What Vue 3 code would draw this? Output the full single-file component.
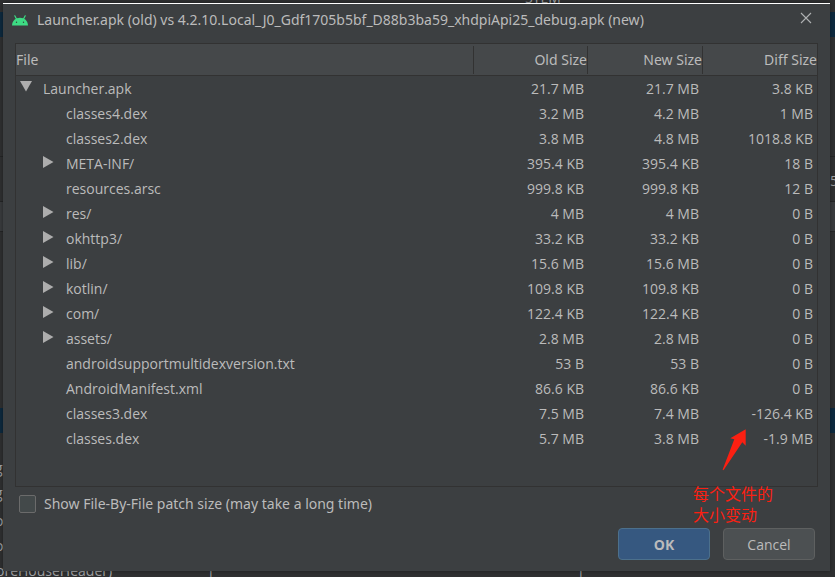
<script setup>
import { ref } from 'vue'

const showPatch = ref(false)

const rows = [
  { name: 'Launcher.apk', kind: 'root', old: '21.7 MB', new: '21.7 MB', diff: '3.8 KB' },
  { name: 'classes4.dex', kind: 'file', old: '3.2 MB', new: '4.2 MB', diff: '1 MB' },
  { name: 'classes2.dex', kind: 'file', old: '3.8 MB', new: '4.8 MB', diff: '1018.8 KB' },
  { name: 'META-INF/', kind: 'dir', old: '395.4 KB', new: '395.4 KB', diff: '18 B' },
  { name: 'resources.arsc', kind: 'file', old: '999.8 KB', new: '999.8 KB', diff: '12 B' },
  { name: 'res/', kind: 'dir', old: '4 MB', new: '4 MB', diff: '0 B' },
  { name: 'okhttp3/', kind: 'dir', old: '33.2 KB', new: '33.2 KB', diff: '0 B' },
  { name: 'lib/', kind: 'dir', old: '15.6 MB', new: '15.6 MB', diff: '0 B' },
  { name: 'kotlin/', kind: 'dir', old: '109.8 KB', new: '109.8 KB', diff: '0 B' },
  { name: 'com/', kind: 'dir', old: '122.4 KB', new: '122.4 KB', diff: '0 B' },
  { name: 'assets/', kind: 'dir', old: '2.8 MB', new: '2.8 MB', diff: '0 B' },
  { name: 'androidsupportmultidexversion.txt', kind: 'file', old: '53 B', new: '53 B', diff: '0 B' },
  { name: 'AndroidManifest.xml', kind: 'file', old: '86.6 KB', new: '86.6 KB', diff: '0 B' },
  { name: 'classes3.dex', kind: 'file', old: '7.5 MB', new: '7.4 MB', diff: '-126.4 KB' },
  { name: 'classes.dex', kind: 'file', old: '5.7 MB', new: '3.8 MB', diff: '-1.9 MB' }
]
</script>

<template>
  <div class="desktop">
    <div class="backdrop" aria-hidden="true">
      <div class="band band-top"></div>
      <div class="band band-panel"></div>
      <div class="band band-bottom"></div>
      <span class="scrap scrap-top">STEM</span>
      <span class="scrap scrap-right">5</span>
      <span class="scrap scrap-g1">g</span>
      <span class="scrap scrap-g2">g</span>
      <span class="scrap scrap-o1">o</span>
      <span class="scrap scrap-o2">o</span>
      <span class="scrap scrap-foot">oreHouseHeader)</span>
      <span class="scrap scrap-bar">|</span>
      <span class="scrap scrap-bar-right">|</span>
    </div>

    <section class="dialog" role="dialog" aria-labelledby="dialog-title">
      <header class="titlebar">
        <svg class="android" viewBox="0 0 16 11" width="16" height="11">
          <path d="M4.500 4 2.800.8M11.500 4 13.200.8" stroke="#3ddc84" stroke-width="1.200" stroke-linecap="round" />
          <path d="M0 10.500C.2 5.800 3.600 2.800 8 2.800s7.800 3 8 7.700z" fill="#3ddc84" />
          <circle cx="4.500" cy="7.300" r=".7" fill="#34423b" />
          <circle cx="11.500" cy="7.300" r=".7" fill="#34423b" />
        </svg>
        <h1 id="dialog-title">Launcher.apk (old) vs 4.2.10.Local_J0_Gdf1705b5bf_D88b3ba59_xhdpiApi25_debug.apk (new)</h1>
        <button class="close" type="button" aria-label="Close">
          <svg viewBox="0 0 12 12" width="12" height="12">
            <path d="M1 1 11 11M11 1 1 11" stroke="#b0b2b3" stroke-width="1.100" />
          </svg>
        </button>
      </header>

      <div class="pane">
        <table>
          <colgroup>
            <col />
            <col class="old-col" />
            <col class="new-col" />
            <col class="diff-col" />
          </colgroup>
          <thead>
            <tr>
              <th scope="col"><div class="head">File</div></th>
              <th scope="col"><div class="head">Old Size</div></th>
              <th scope="col"><div class="head">New Size</div></th>
              <th scope="col"><div class="head">Diff Size</div></th>
            </tr>
          </thead>
          <tbody>
            <tr v-for="row in rows" :key="row.name">
              <td>
                <div class="node" :class="row.kind">
                  <svg v-if="row.kind === 'root'" class="arrow" viewBox="0 0 12 12" width="12" height="12">
                    <path d="M0 0H12L6 10.500Z" fill="#adadad" />
                  </svg>
                  <svg v-else-if="row.kind === 'dir'" class="arrow" viewBox="0 0 12 12" width="12" height="12">
                    <path d="M0 0V12L10.500 6Z" fill="#adadad" />
                  </svg>
                  <span>{{ row.name }}</span>
                </div>
              </td>
              <td>{{ row.old }}</td>
              <td>{{ row.new }}</td>
              <td>{{ row.diff }}</td>
            </tr>
          </tbody>
        </table>
      </div>

      <label class="option">
        <input v-model="showPatch" type="checkbox" />
        <span>Show File-By-File patch size (may take a long time)</span>
      </label>

      <footer class="actions">
        <button class="btn primary" type="button">OK</button>
        <button class="btn" type="button">Cancel</button>
      </footer>

      <div class="note">
        <svg viewBox="0 0 24 42" width="24" height="42">
          <path d="M23.700.3 8.300 9.300 12.300 10.200.7 40.500Q.8 42 2 40.500L20.300 13.200 23.700 16.800Z" fill="#fb2012" />
        </svg>
        <p>每个文件的<br />大小变动</p>
      </div>
    </section>
  </div>
</template>

<style>
body {
  margin: 0;
  background: #2f3031;
}
</style>

<style scoped>
* {
  box-sizing: border-box;
}

.desktop {
  position: relative;
  display: flex;
  min-height: 100vh;
  padding: 3px 5px 6px 3px;
  overflow: hidden;
  background: #2f3031;
  color: #bbbbbb;
  font-family: "Open Sans", "Noto Sans", "Noto Sans CJK SC", sans-serif;
  font-size: 14px;
  line-height: 20px;
}

.backdrop {
  position: absolute;
  inset: 0;
  overflow: hidden;
}

.band {
  position: absolute;
  left: 0;
  right: 0;
  height: 25px;
  background: #0d293e;
}

.band-top {
  top: 12px;
}

.band-panel {
  top: 156px;
  height: 76px;
  border: solid #242526;
  border-width: 1px 0;
  background: linear-gradient(#2f3031 44px, #242526 44px, #242526 45px, #393b3d 45px);
}

.band-bottom {
  top: 408px;
}

.scrap {
  position: absolute;
  color: #a0a2a4;
}

.scrap-top {
  top: -12px;
  left: 525px;
}

.scrap-right {
  top: 171px;
  right: -3px;
}

.scrap-g1,
.scrap-g2,
.scrap-o1,
.scrap-o2 {
  left: -5px;
}

.scrap-g1 {
  top: 458px;
}

.scrap-g2 {
  top: 483px;
}

.scrap-o1 {
  top: 511px;
}

.scrap-o2 {
  top: 536px;
}

.scrap-foot {
  top: 561px;
  left: -4px;
}

.scrap-bar,
.scrap-bar-right {
  top: 559px;
}

.scrap-bar {
  left: 207px;
}

.scrap-bar-right {
  left: 577px;
}

.dialog {
  position: relative;
  display: flex;
  flex: 1;
  flex-direction: column;
  min-width: 0;
  padding: 0 12px 11px;
  border-top: 1px solid #ffffff;
  background: #3c3f41;
  box-shadow: 0 0 4px rgba(0, 0, 0, 0.4);
}

.titlebar {
  display: flex;
  align-items: center;
  height: 32px;
  margin-bottom: 7px;
}

.android {
  flex: none;
  margin: 0 9px 0 -3px;
}

h1 {
  flex: 1;
  margin: 0;
  overflow: hidden;
  font-family: "Noto Sans", sans-serif;
  font-size: 14px;
  font-weight: 400;
  white-space: nowrap;
}

.close {
  display: flex;
  flex: none;
  margin-bottom: 4px;
  padding: 0 6px;
  border: 0;
  background: none;
}

.pane {
  flex: 1;
  border: 1px solid #323232;
}

table {
  width: 100%;
  border-collapse: separate;
  border-spacing: 0;
  table-layout: fixed;
}

.old-col,
.diff-col {
  width: 114px;
}

.new-col {
  width: 115px;
}

th {
  height: 32px;
  padding: 0;
  border-bottom: 1px solid #323232;
  background: #45484a;
  font-family: "Noto Sans", sans-serif;
  font-weight: 400;
  text-align: right;
}

.head {
  height: 28px;
  border-right: 1px solid #323232;
  line-height: 28px;
}

th:first-child {
  text-align: left;
}

th:last-child .head {
  border-right: 0;
}

td {
  height: 25px;
  padding: 0 4px 0 0;
  line-height: 25px;
  text-align: right;
  white-space: nowrap;
}

.node {
  display: flex;
  align-items: center;
  height: 25px;
}

.arrow {
  flex: none;
  margin: 0 11px 3px 0;
}

.root {
  padding-left: 4px;
}

.dir {
  padding-left: 27px;
}

.file {
  padding-left: 50px;
}

.option {
  display: flex;
  align-items: center;
  gap: 8px;
  height: 33px;
  padding-left: 4px;
  font-family: "Noto Sans", sans-serif;
}

.option input {
  width: 17px;
  height: 18px;
  margin: 0;
  border: 1px solid #6b6b6b;
  border-radius: 2px;
  background: #43494a;
  appearance: none;
}

.option input:checked {
  background: #365880;
}

.actions {
  display: flex;
  justify-content: flex-end;
  gap: 13px;
  padding: 8px 3px 0 0;
}

.btn {
  width: 92px;
  height: 32px;
  padding: 0;
  border: 1px solid #5e6060;
  border-radius: 4px;
  background: #4c5052;
  color: #bbbbbb;
  font-family: inherit;
  font-size: 14px;
}

.primary {
  border-color: #4c708c;
  background: #365880;
  font-weight: 700;
}

/* Callout laid over the table and footer */
.note {
  position: absolute;
  right: 57px;
  bottom: 46px;
  color: #fb2012;
  font-family: "Noto Sans CJK SC", sans-serif;
  font-size: 16px;
  line-height: 21px;
  pointer-events: none;
}

.note svg {
  display: block;
  margin: 0 0 12px 29px;
}

.note p {
  margin: 0;
}
</style>
